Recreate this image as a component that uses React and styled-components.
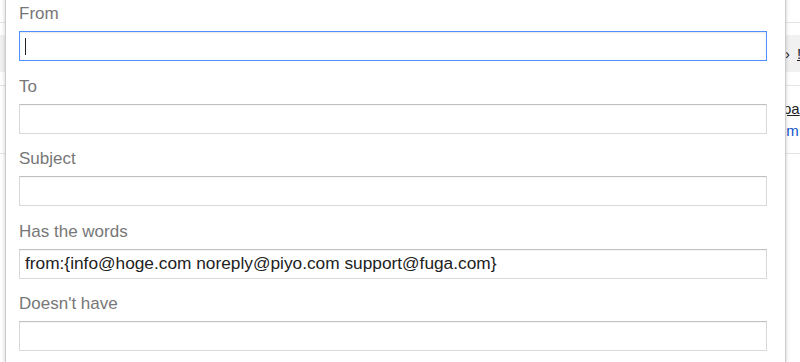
import React from "react";
import styled, { createGlobalStyle } from "styled-components";

const Global = createGlobalStyle`
  html, body { margin: 0; padding: 0; background: #fff; }
  body { font-family: "Liberation Sans", Arial, sans-serif; overflow: hidden; }
  #root { width: 800px; height: 362px; position: relative; overflow: hidden; }
`;

const Page = styled.div`
  width: 800px;
  height: 362px;
  background: #fff;
  display: flex;
  flex-direction: column;
`;

const BgRow = styled.div`
  height: ${(p) => p.$h}px;
  background: ${(p) => p.$bg || "#fff"};
  border-bottom: ${(p) => (p.$line ? "1px solid #e5e5e5" : "none")};
  display: flex;
  align-items: center;
  padding-left: ${(p) => p.$indent || 783}px;
  font-size: 15px;
  white-space: nowrap;
  color: #222;
`;

const BgLink = styled.span`
  color: ${(p) => (p.$blue ? "#1155cc" : "#222")};
  text-decoration: ${(p) => (p.$underline ? "underline" : "none")};
  line-height: 22px;
  margin-left: ${(p) => p.$gap || 0}px;
`;

const BgStack = styled.div`
  display: flex;
  flex-direction: column;
  padding-left: 783px;
  font-size: 15px;
  white-space: nowrap;
  height: 67px;
  justify-content: center;
  border-bottom: 1px solid #e5e5e5;
`;

const Panel = styled.div`
  position: absolute;
  left: 5px;
  top: -10px;
  width: 781px;
  height: 400px;
  box-sizing: border-box;
  background: #fff;
  border: 1px solid rgba(0, 0, 0, 0.2);
  box-shadow: 0 2px 4px rgba(0, 0, 0, 0.2);
  padding: 13px 18px 0 13px;
`;

const Field = styled.div`
  display: flex;
  flex-direction: column;
  margin-bottom: 15.6px;
`;

const Label = styled.div`
  font-size: 17px;
  line-height: 20px;
  height: 20px;
  color: #777;
  margin-bottom: 7px;
  white-space: nowrap;
`;

const Box = styled.div`
  height: 30px;
  box-sizing: border-box;
  border: 1px solid ${(p) => (p.$focused ? "#4d90fe" : "#d9d9d9")};
  border-top-color: ${(p) => (p.$focused ? "#4d90fe" : "#c0c0c0")};
  box-shadow: ${(p) =>
    p.$focused ? "inset 0 1px 2px rgba(0,0,0,0.1)" : "inset 0 1px 1px rgba(0,0,0,0.04)"};
  padding: 0 5px;
  display: flex;
  align-items: center;
  font-size: 17.3px;
  color: #222;
  white-space: nowrap;
  overflow: hidden;
`;

const Caret = styled.span`
  display: inline-block;
  width: 1px;
  height: 17px;
  background: #222;
`;

const fields = [
  { label: "From", focused: true },
  { label: "To" },
  { label: "Subject" },
  {
    label: "Has the words",
    value: "from:{info@hoge.com noreply@piyo.com support@fuga.com}",
  },
  { label: "Doesn't have" },
];

export default function App() {
  return (
    <>
      <Global />
      <Page>
        <BgRow $h={22} $line />
        <BgRow $h={12} />
        <BgRow $h={37} $bg="#f1f1f1" $indent={785}>
          <BgLink>›</BgLink>
          <BgLink $underline $gap={7}>!</BgLink>
        </BgRow>
        <BgRow $h={13} $line />
        <BgStack>
          <BgLink $underline>pa</BgLink>
          <BgLink $blue>im</BgLink>
        </BgStack>
      </Page>
      <Panel>
        {fields.map((f) => (
          <Field key={f.label}>
            <Label>{f.label}</Label>
            <Box $focused={f.focused}>
              {f.focused ? <Caret /> : f.value}
            </Box>
          </Field>
        ))}
      </Panel>
    </>
  );
}
